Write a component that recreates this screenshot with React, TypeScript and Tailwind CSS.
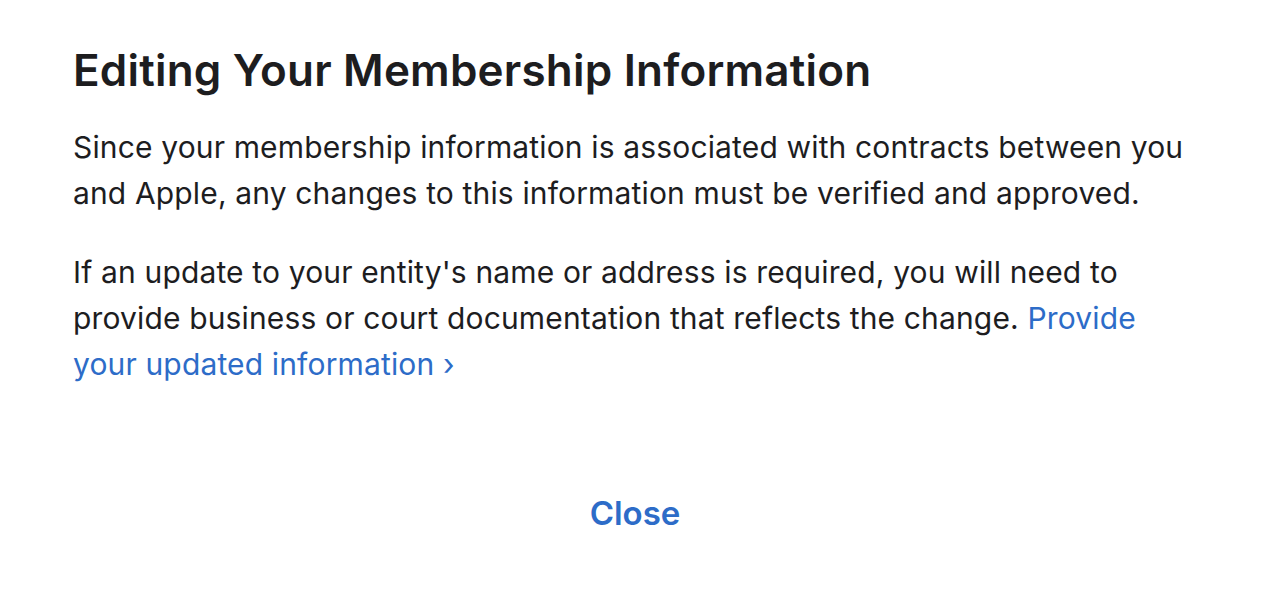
export default function App() {
  return (
    <div
      className="min-h-[600px] w-full bg-white text-[#1d1d1f]"
      style={{ fontFamily: "Inter, 'Noto Sans', sans-serif" }}
    >
      <div className="px-[73px] pt-[44px]">
        <h1 className="text-[44px] font-semibold leading-[52px] tracking-[0.2px]">
          Editing Your Membership Information
        </h1>
        <p className="mt-[29px] text-[30px] leading-[45.5px] tracking-[0.15px]">
          Since your membership information is associated with contracts between you and Apple, any
          changes to this information must be verified and approved.
        </p>
        <p className="mt-[33px] text-[30px] leading-[46px] tracking-[0.15px]">
          If an update to your entity's name or address is required, you will need to provide business
          or court documentation that reflects the change.{" "}
          <a href="#" className="text-[#2d6cc8]">
            Provide your updated information ›
          </a>
        </p>
      </div>
      <div className="mt-[106px] flex justify-center">
        <button className="text-[33px] font-semibold leading-[40px] text-[#2d6cc8]">Close</button>
      </div>
    </div>
  );
}
